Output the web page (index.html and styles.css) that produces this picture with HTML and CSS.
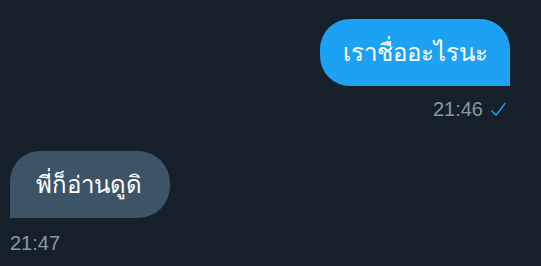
FILE: index.html
```html
<!DOCTYPE html>
<html lang="th">
<head>
<meta charset="utf-8">
<link rel="stylesheet" href="styles.css">
</head>
<body>
<div class="chat">
  <div class="msg out">
    <div class="bubble">เราชื่ออะไรนะ</div>
    <div class="meta">21:46 <svg class="check" viewBox="0 0 18 18" width="17" height="17"><path d="M2 10.5 L6.5 15 L16 2.5" fill="none" stroke="#1da1f2" stroke-width="1.6" stroke-linecap="round" stroke-linejoin="round"/></svg></div>
  </div>
  <div class="msg in">
    <div class="bubble">พี่ก็อ่านดูดิ</div>
    <div class="meta">21:47</div>
  </div>
</div>
</body>
</html>
```

FILE: styles.css
```css
html, body {
  margin: 0;
  padding: 0;
  background: #15202b;
  width: 541px;
  height: 266px;
  overflow: hidden;
}
.chat {
  display: flex;
  flex-direction: column;
  padding: 19px 31px 0 10px;
  font-family: "Noto Sans", "Liberation Sans", sans-serif;
}
.msg {
  display: flex;
  flex-direction: column;
}
.msg.out {
  align-items: flex-end;
}
.msg.in {
  align-items: flex-start;
  margin-top: 30px;
}
.bubble {
  height: 67px;
  box-sizing: border-box;
  display: flex;
  align-items: center;
  color: #ffffff;
  font-size: 24px;
  padding: 0 22px 0 23px;
}
.out .bubble {
  background: #1da1f2;
  border-radius: 30px 30px 0 30px;
}
.in .bubble {
  background: #3d5466;
  border-radius: 30px 32px 32px 0;
  padding: 0 28px 0 26px;
}
.meta {
  display: flex;
  align-items: center;
  gap: 7px;
  color: #8899a6;
  font-family: "Liberation Sans", sans-serif;
  font-size: 20px;
  margin-top: 12px;
  line-height: 23px;
}
.out .meta {
  margin-right: 3px;
}
.in .meta {
  margin-top: 14px;
}
.check {
  display: block;
}
```
